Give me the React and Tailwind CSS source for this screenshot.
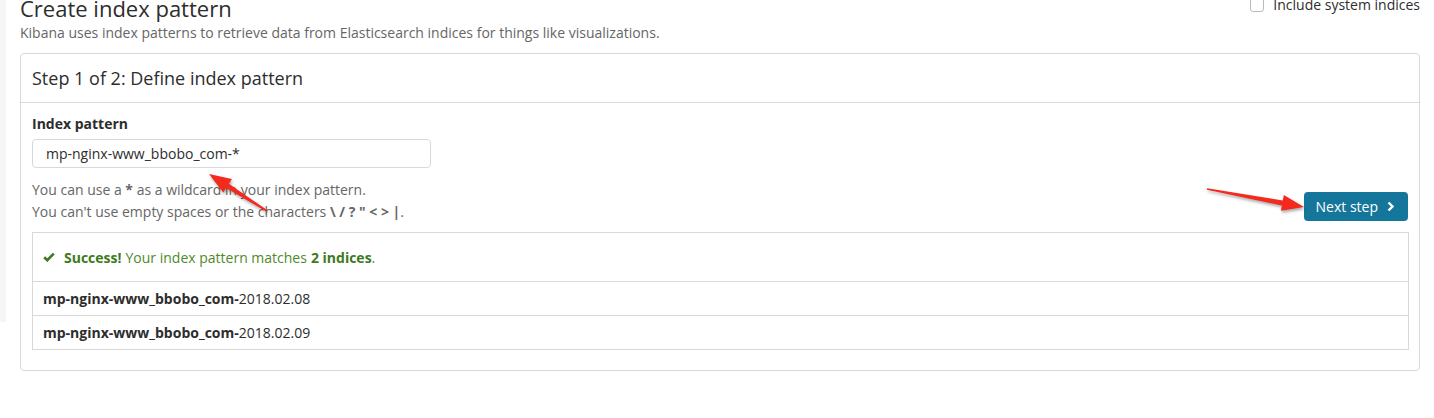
import React from 'react';

const Arrow = ({ x1, y1, x2, y2 }) => {
  // tapered red annotation arrow, tail (x1,y1) -> tip (x2,y2)
  const dx = x2 - x1;
  const dy = y2 - y1;
  const len = Math.sqrt(dx * dx + dy * dy);
  const ux = dx / len;
  const uy = dy / len;
  const nx = -uy;
  const ny = ux;
  const head = 22;
  const bx = x2 - ux * head;
  const by = y2 - uy * head;
  const pts = [
    [x1 + nx * 0.8, y1 + ny * 0.8],
    [bx + nx * 2.5, by + ny * 2.5],
    [bx + nx * 8, by + ny * 8],
    [x2, y2],
    [bx - nx * 8, by - ny * 8],
    [bx - nx * 2.5, by - ny * 2.5],
    [x1 - nx * 0.8, y1 - ny * 0.8],
  ];
  return (
    <polygon
      points={pts.map(p => p.join(',')).join(' ')}
      fill="#f42a1e"
      style={{ filter: 'drop-shadow(1px 2px 1.5px rgba(0,0,0,0.35))' }}
    />
  );
};

const IndexRow = ({ date }) => (
  <div className="h-[34px] flex items-center px-[10px] border-t border-[#d9d9d9] text-[14px] text-[#2d2d2d]">
    <span className="font-bold">mp-nginx-www_bbobo_com-</span>
    <span>{date}</span>
  </div>
);

const App = () => {
  return (
    <div className="relative w-[1434px] h-[418px] bg-white overflow-hidden text-[#333]" style={{ fontFamily: '"Open Sans", "DejaVu Sans", sans-serif' }}>
      <div className="absolute left-0 top-0 w-[6px] h-[322px] bg-[#f5f5f5]" />

      <div className="pl-[20px] pr-[14px]">
        <div className="flex justify-between">
          <div>
            <h1 className="text-[22px] leading-[22px] -mt-[3px] text-[#2d2d2d]">Create index pattern</h1>
            <p className="text-[14px] leading-[18px] mt-[5px] text-[#666]">
              Kibana uses index patterns to retrieve data from Elasticsearch indices for things like visualizations.
            </p>
          </div>
          <label className="flex items-start gap-[9px] text-[14px] leading-[16px] text-[#2d2d2d] -mt-[3px]">
            <span className="w-[14px] h-[14px] border border-[#bbb] rounded-[3px] bg-white mt-[1px]" />
            Include system indices
          </label>
        </div>

        <div className="mt-[11px] border border-[#d9d9d9] rounded-[4px] w-[1400px] pb-[20px]">
          <div className="h-[49px] flex items-center px-[11px] border-b border-[#d9d9d9] text-[18px] text-[#2d2d2d]">
            Step 1 of 2: Define index pattern
          </div>
          <div className="px-[11px] pt-[12px]">
            <div className="text-[14px] font-bold text-[#2d2d2d] leading-[18px]">Index pattern</div>
            <div className="flex items-end justify-between">
              <div>
                <div className="mt-[6px] w-[399px] h-[29px] border border-[#d9d9d9] rounded-[4px] flex items-center px-[13px] text-[14px] text-[#2d2d2d]">
                  mp-nginx-www_bbobo_com-*
                </div>
                <div className="mt-[11px] text-[14px] leading-[22px] text-[#666]">
                  <div>You can use a <b>*</b> as a wildcard in your index pattern.</div>
                  <div>You can't use empty spaces or the characters <b>\ / ? " &lt; &gt; |</b>.</div>
                </div>
              </div>
              <button className="mb-[2px] h-[29px] pl-[12px] pr-[13px] rounded-[4px] bg-[#15769c] text-white text-[14px] flex items-center gap-[9px]">
                Next step
                <svg width="8" height="11" viewBox="0 0 8 11"><path d="M1.5 1.5 L5.5 5.5 L1.5 9.5" stroke="white" strokeWidth="2.4" fill="none" /></svg>
              </button>
            </div>
            <div className="mt-[9px] border border-[#d9d9d9] w-[1377px]">
              <div className="h-[48px] flex items-center px-[10px] text-[14px] text-[#4f8a2a]">
                <svg width="12" height="10" viewBox="0 0 12 10" className="mr-[9px]"><path d="M1.2 5.2 L4.3 8.2 L10.8 1.6" stroke="#3e7a1d" strokeWidth="2.6" fill="none" /></svg>
                <b className="text-[#3e7a1d]">Success!</b>
                <span className="ml-[4px]">Your index pattern matches</span>
                <b className="ml-[4px] text-[#3e7a1d]">2 indices</b>
                <span>.</span>
              </div>
              <IndexRow date="2018.02.08" />
              <IndexRow date="2018.02.09" />
            </div>
          </div>
        </div>
      </div>

      <svg className="absolute left-0 top-0 pointer-events-none" width="1434" height="418">
        <Arrow x1={267} y1={211} x2={209} y2={174} />
        <Arrow x1={1207} y1={189} x2={1304} y2={207} />
      </svg>
    </div>
  );
};

export default App;
